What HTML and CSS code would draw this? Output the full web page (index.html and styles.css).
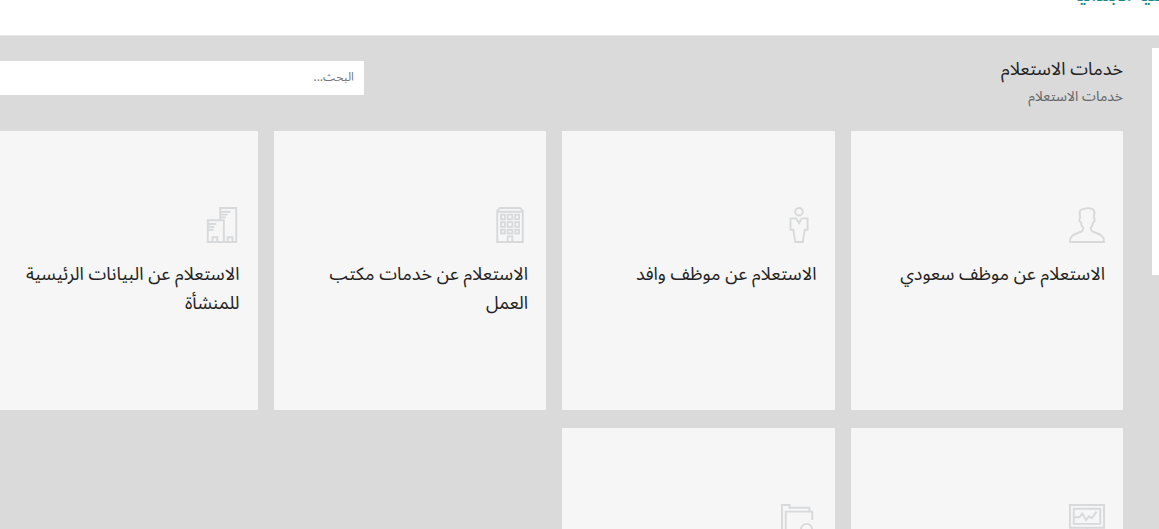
FILE: index.html
```html
<!DOCTYPE html>
<html lang="ar" dir="rtl">
<head>
<meta charset="utf-8">
<title>خدمات الاستعلام</title>
<link rel="stylesheet" href="styles.css">
</head>
<body>
<header class="topbar"><a class="topbar-link" href="#">التصفية الابتدائية</a></header>
<div class="layout">
  <aside class="sidebar"></aside>
  <main class="content">
    <div class="page-head">
      <div>
        <h1 class="page-title">خدمات الاستعلام</h1>
        <p class="page-subtitle">خدمات الاستعلام</p>
      </div>
      <input class="search" type="search" placeholder="البحث..." aria-label="البحث">
    </div>
    <div class="cards">
      <a class="card" href="#">
        <svg class="icon" viewBox="0 0 38 38"><path d="M1 37C1 29 6 29 13 26Q15 25 15 22L13 19V17L11 15V12L12 11L11 6Q12 2 16 2Q22 0 26 3L27 6L26 11L27 12V15L25 17V19L23 22Q23 25 25 26C32 29 37 29 37 37Z"/></svg>
        <h2 class="card-title">الاستعلام عن موظف سعودي</h2>
      </a>
      <a class="card" href="#">
        <svg class="icon" viewBox="0 0 20 38"><circle cx="10" cy="5" r="4"/><path d="M7 12H1V24H4L6 37H14L16 24H19V12H13L10 17Z"/></svg>
        <h2 class="card-title">الاستعلام عن موظف وافد</h2>
      </a>
      <a class="card" href="#">
        <svg class="icon" viewBox="0 0 29 38"><path d="M1 37V4L4 1H25L28 4V37ZM2 5H27M12 37V31H17V37M5 8h4v5H5zM12 8h5v5h-5zM20 8h4v5h-4zM5 16h4v5H5zM12 16h5v5h-5zM20 16h4v5h-4zM5 24h4v4H5zM12 24h5v4h-5zM20 24h4v4h-4z"/></svg>
        <h2 class="card-title">الاستعلام عن خدمات مكتب العمل</h2>
      </a>
      <a class="card" href="#">
        <svg class="icon" viewBox="0 0 32 38"><path d="M14 14V1H31V37H1V14H18V37M6 37V32H11V37M22 37V32H27V37M15 5H25M15 8H22M15 11H20M2 18H10M2 21H8M2 24H7"/></svg>
        <h2 class="card-title">الاستعلام عن البيانات الرئيسية للمنشأة</h2>
      </a>
      <a class="card" href="#" aria-label="المؤشرات">
        <svg class="icon" viewBox="0 0 38 38"><path d="M1 1H37V25H1ZM5 5H33V21H5ZM19 25V34M12 36L19 28L26 36M6 14H11L14 10L18 17L21 13L24 15L29 8"/></svg>
      </a>
      <a class="card" href="#" aria-label="الملفات">
        <svg class="icon" viewBox="0 0 38 38"><path d="M1 36V1H9V4H30V7M5 36V8H33V17M1 36H20"/><circle cx="27" cy="27" r="6"/></svg>
      </a>
    </div>
  </main>
</div>
</body>
</html>
```
FILE: styles.css
```css
* { box-sizing: border-box; }
body {
  margin: 0;
  overflow: hidden;
  background: #dadada;
  color: #222;
  font-family: "Noto Sans Arabic", "DejaVu Sans", sans-serif;
}
.topbar {
  display: flow-root;
  height: 36px;
  background: #fff;
  border-bottom: 1px solid #e8e8e8;
}
.topbar-link {
  display: block;
  width: max-content;
  margin-top: -14px;
  margin-right: -32px;
  color: #178a8a;
  font-size: 16px;
  font-weight: bold;
  line-height: 20px;
  text-decoration: none;
}
.layout {
  display: flex;
  align-items: flex-start;
  gap: 29px;
  margin-left: -15px;
  padding-top: 12px;
}
.sidebar {
  flex: none;
  width: 7px;
  height: 227px;
  background: #fff;
}
.content { flex: 1; min-width: 0; }
.page-head {
  display: flex;
  justify-content: space-between;
  align-items: flex-start;
  padding-top: 8px;
  height: 83px;
}
.page-title {
  margin: 0;
  font-size: 18px;
  font-weight: 400;
  line-height: 26px;
}
.page-subtitle {
  margin: 0;
  color: #666;
  font-size: 14px;
  line-height: 30px;
}
.search {
  width: 33.3%;
  height: 34px;
  margin: 5px 0 0;
  padding: 0 10px 1px;
  border: 0;
  border-radius: 1px;
  background: #fff;
  font: 12px "Noto Sans Arabic", "DejaVu Sans", sans-serif;
}
.search::placeholder { color: #777; opacity: 1; }
.cards {
  display: grid;
  grid-template-columns: repeat(4, 1fr);
  gap: 18px 16px;
}
.card {
  min-height: 279px;
  padding: 76px 18px 0;
  border-radius: 1px;
  background: #f6f6f6;
  color: inherit;
  text-decoration: none;
}
.icon {
  display: block;
  width: 36px;
  height: 36px;
  fill: none;
  stroke: #d8d9db;
  stroke-width: 2;
}
.card-title {
  margin: 17px 0 0;
  font-size: 18px;
  font-weight: 400;
  line-height: 29px;
}
```
